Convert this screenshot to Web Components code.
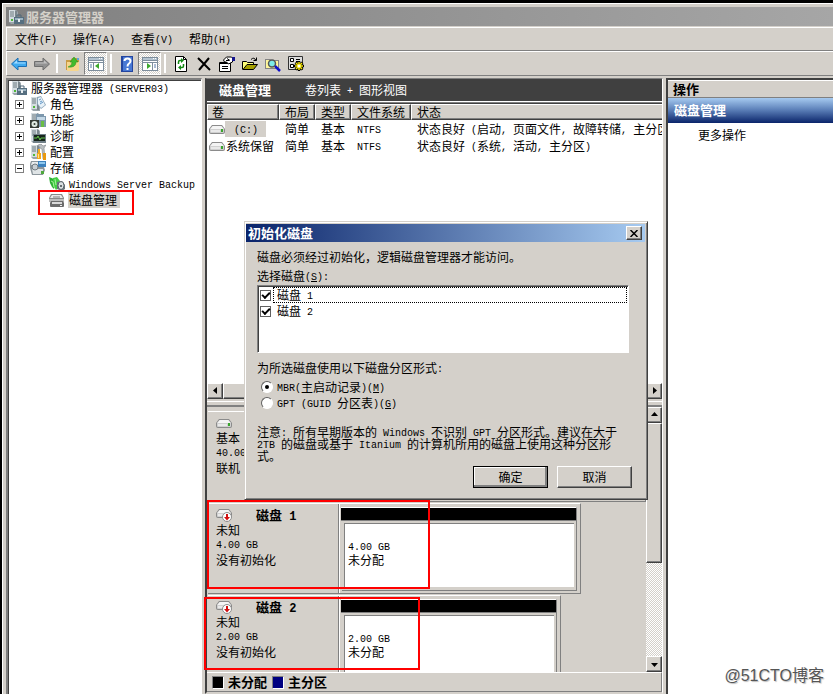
<!DOCTYPE html>
<html lang="zh-CN">
<head>
<meta charset="utf-8">
<title>服务器管理器</title>
<style>
html, body { margin: 0; height: 100%; overflow: hidden; background: #000; }
body {
  --face: #d4d0ca; --shadow: #808080; --dark: #404040; --light: #fff;
  font: 12px/16px "Noto Sans CJK SC", sans-serif; color: #000;
}
</style>
</head>
<body>
<server-manager></server-manager>
<script>
/* Half-width runs get a monospaced face that is half as wide as a Chinese character. */
const t = s => '<span>' + s.replace(/[\x20-\x7e]+/g, m => `<span class="l">${m}</span>`) + '</span>';

const BASE = `
  *, *::before { box-sizing: border-box; }
  :host { display: block; box-sizing: border-box; }
  .l { font-family: "Liberation Mono", monospace; font-size: 10px; line-height: 0; white-space: pre; vertical-align: 1px; }
  b .l { font-size: 12px; vertical-align: baseline; }
  button { font: inherit; color: inherit; background: var(--face); padding: 0; margin: 0; border: 0; border-radius: 0; }
  a { color: inherit; text-decoration: none; }
`;
class Base extends HTMLElement {
  connectedCallback() {
    if (this.shadowRoot) return;
    const r = this.attachShadow({ mode: 'open' });
    r.innerHTML = `<style>${BASE}${this.css()}</style>${this.html()}`;
  }
  css() { return ''; }
  html() { return '<slot></slot>'; }
}

const TOWER = `<path d="M1 1h7l2 2v12H3l-2-2z" fill="#9aa5ab"/><path d="M1 1h6v12H1z" fill="#d5dde1"/><path d="M2 3h4M2 5h4M2 7h4" stroke="#6d7a80"/><path d="M7 2h2v12H7z" fill="#7b878d"/><path d="M3 10h2v2H3z" fill="#4fb83a"/>`;
const DRIVE = `<path d="M3 4h10l3 4v3q0 2-2 2H2q-2 0-2-2V8z" fill="#8b8b8b"/><path d="M3.5 5h9l2.500 3H1z" fill="#f4f4f4"/><path d="M1 8h14v3q0 1-1 1H2q-1 0-1-1z" fill="#d0d0d0"/><path d="M2 9h9v2H2z" fill="#e9e9e9"/><path d="M12 8h2v3h-2z" fill="#39a52c"/>`;
const WINPANE = `<path d="M0 1h16v14H0z" fill="#7d8d9c"/><path d="M1 2h14v2H1z" fill="#b4c3d0"/><path d="M11 2h1v1h-1zM13 2h1v1h-1z" fill="#fff"/><path d="M1 5h14v1H1z" fill="#fff"/><path d="M1 7h14v7H1z" fill="#fff"/>`;
const ICONS = {
  server: TOWER + `<path d="M9 8V6h4v2" fill="none" stroke="#506878"/><path d="M6 8h10v7H6z" fill="#566f80"/><path d="M7 9h8v2H7z" fill="#9db4c2"/><path d="M10 10h2v3h-2z" fill="#e8edf0"/>`,
  roles: TOWER + `<path d="M7 1l4-1 5 9-5 4-4-5z" fill="#8ba4b8"/><path d="M8 2l3-1 4 8-4 3-3-4z" fill="#e7f1f8"/><path d="M9 4l2-1M10 6l2-1M10 8l3-2" stroke="#6297c7"/>`,
  features: TOWER + `<path d="M6 2h8v2h2v11H6z" fill="#7d98ad"/><path d="M7 5h8v3H7z" fill="#c3d7e5"/><path d="M0 8h9v8H0z" fill="#353c35"/><circle cx="4.5" cy="12" r="3" fill="#dfeae2"/><circle cx="4.5" cy="12" r="1" fill="#353c35"/><path d="M11 9h3v6h-3z" fill="#69bd45"/>`,
  diag: TOWER + `<path d="M3 6h13v9H3z" fill="#718089"/><path d="M4 7h11v6H4z" fill="#17261c"/><path d="M4 10h3l1-2 2 4 1-2h4" fill="none" stroke="#67c64e"/>`,
  config: TOWER + `<path d="M8 1l2 3 2 1 1 10h2L14 4l2-3-3 1-2-2z" fill="#b9bfc2" stroke="#7f8589" stroke-width=".6"/><path d="M8 5h2v4h1v6H7V9h1z" fill="#f2a91e"/><path d="M13 9h3v7h-3z" fill="#e99a12"/><path d="M8 10h1v4H8z" fill="#ffe18a"/>`,
  storage: `<path d="M1 1h9l1 3v4H0V4z" fill="#8d969b"/><path d="M2 2h7l1 3H1z" fill="#e8ecee"/><path d="M0 8l4-2 10 1 1 3-2 5H2z" fill="#8c969c"/><path d="M2 9h11v5H3z" fill="#dfe4e6"/><path d="M8 1h8v6H8z" fill="#3d82bd"/><path d="M9 2h6v2H9z" fill="#8ec8ee"/><circle cx="5" cy="7" r="3" fill="#c9d0d4" stroke="#737b80"/><path d="M11 11h3v3h-3z" fill="#4fa83d"/>`,
  backup: `<path d="M0 1l5 2 1 5-1 5-2-2-2-4z" fill="#2eb135"/><path d="M4 2l4-1 3 4-1 6-3 3-3-5z" fill="#43ce45"/><path d="M2 5l2 1 1 5M6 3l1 6" stroke="#a5f29b" fill="none"/><path d="M8 6l5-1 3 4v4l-3 2-5-2z" fill="#68747a"/><ellipse cx="12" cy="9.500" rx="3" ry="4" fill="#d9dfe1" stroke="#59646a"/><circle cx="12" cy="10" r="1" fill="#3f494e"/>`,
  disk: `<path d="M2 2h11l2 4v3H0V6z" fill="#888"/><path d="M3 3h9l2 3H1z" fill="#e9e9e9"/><path d="M4 4h7v2H4z" fill="#b4b4b4"/><path d="M0 7h15v3H0z" fill="#bdbdbd"/><path d="M2 9h12l1 2v3q0 1-1 1H2q-1 0-1-1v-3z" fill="#6b6b6b"/><path d="M3 10h10v2H3z" fill="#d9d9d9"/><path d="M11 13h2v1h-2z" fill="#eee"/>`,
  drive: DRIVE,
  driveWarn: `<g transform="translate(0 -2)">${DRIVE}</g><circle cx="11" cy="10" r="4.500" fill="#fff" stroke="#8d8d8d"/><path d="M10 7h2v3h2l-3 3.500L8 10h2z" fill="#d20f0f"/>`,
  back: `<path d="M0.500 8L7 2v3.500h8.500v5H7V14z" fill="#3eaaf0" stroke="#1c6fb3"/><path d="M2.500 7.500L6 4.300v2.200h8.500v1z" fill="#a5dcff"/>`,
  fwd: `<path d="M15.500 8L9 2v3.500H.5v5H9V14z" fill="#929292" stroke="#6e6e6e"/><path d="M13.500 7.500L10 4.300v2.200H1.500v1z" fill="#c0c0c0"/>`,
  up: `<path d="M1 4h5l1-2h7v12H1z" fill="#c89a43"/><path d="M2 6h12v8l-1 1H2z" fill="#f6d58c"/><path d="M12 2h2v2h-2z" fill="#5aa6dc"/><path d="M3 11q4-1 4-5H5l4-5 4 5h-2q0 6-8 5z" fill="#42bb2c" stroke="#248a1b" stroke-width=".5"/>`,
  paneL: WINPANE + `<path d="M5 7h1v7H5z" fill="#7d8d9c"/><path d="M2 9h2M2 11h2" stroke="#5679a8"/><path d="M11 7v6l-4-3z" fill="#3da92d"/>`,
  paneR: WINPANE + `<path d="M10 7h1v7h-1z" fill="#7d8d9c"/><path d="M12 9h2M12 11h2" stroke="#5679a8"/><path d="M5 7v6l4-3z" fill="#3da92d"/>`,
  help: `<path d="M2 0h12v16H2z" fill="#24459f"/><path d="M4 1h9v14H4z" fill="#4878d4"/><path d="M5.500 5q0-2.500 3-2.500t3 2.500q0 1.500-1.500 2.500T8.500 10.500" fill="none" stroke="#fff" stroke-width="2"/><path d="M7.500 12h2v2h-2z" fill="#fff"/>`,
  refresh: `<path d="M2.500.5h8l3 3v12h-11z" fill="#fff" stroke="#000"/><path d="M10.500.5v3h3" fill="none" stroke="#000"/><path d="M5.500 8V6q0-1.500 1.500-1.500h2M10.500 8v2q0 1.500-1.500 1.500H7" fill="none" stroke="#138a13" stroke-width="1.500"/><path d="M8 2v5l3-2.500zM8 9v5l-3-2.500z" fill="#138a13"/>`,
  del: `<path d="M2 2l12 12M13 2L3 14" stroke="#000" stroke-width="2"/>`,
  props: `<path d="M.5 6.500h11v9H.5z" fill="#fff" stroke="#000"/><path d="M1 7.500h10M3 10.500h6M3 12.500h6" stroke="#000"/><path d="M4.500 4l3-3h5l1 1v4l-4 2-2-2h-2z" fill="#fff" stroke="#000"/><path d="M7 4.500h3M8 2.500l3 2" stroke="#000"/><path d="M13 1h3v4h-3z" fill="#15158d"/>`,
  open: `<path d="M.5 13.500v-8h4l1 1h6v3" fill="#ffff7a" stroke="#000"/><path d="M1 13.500l4-5h10.500l-4 5z" fill="#a6a000" stroke="#000"/><path d="M9 3.500q3-3 5 1M14.500 1.500v3h-3" stroke="#000" fill="none"/>`,
  find: `<path d="M0 3h5l1 1h8v9H0z" fill="#848484"/><path d="M1 4h4l1 1h7v7H1z" fill="#fff79a"/><circle cx="7" cy="7.500" r="3.500" fill="#7dece9" stroke="#555" stroke-width="1.500"/><path d="M10 10l5 5" stroke="#1010c8" stroke-width="2.500"/>`,
  settings: `<path d="M.5.5h14v13H.5z" fill="#ddd" stroke="#333"/><path d="M2.500 2.500h3v3h-3zM2.500 8.500h3v3h-3z" fill="#fff" stroke="#000"/><path d="M8 3.500h4M8 5.500h4" stroke="#000"/><path d="M11 5v10M6 10h10M7.500 6.500l7 7M14.500 6.500l-7 7" stroke="#000" stroke-width="2.500"/><path d="M11 6v8M7 10h8M8 7l6 6M14 7l-6 6" stroke="#f6e600" stroke-width="1.500"/><circle cx="11" cy="10" r="1.500" fill="#fff"/>`
};

customElements.define('pix-icon', class extends Base {
  css() { return `:host { flex: none; width: 16px; height: 16px; } svg { display: block; }`; }
  html() { return `<svg width="16" height="16" viewBox="0 0 16 16" aria-hidden="true">${ICONS[this.getAttribute('name')]}</svg>`; }
});

customElements.define('title-bar', class extends Base {
  css() { return `:host { display: flex; align-items: center; gap: 2px; height: 19px; margin: 2px 0 1px 3px; padding-left: 2px;
    background: linear-gradient(90deg, #808080, #a6a6a6); color: #d4d0c8; font-size: 13px; font-weight: bold; }`; }
  html() { return `<pix-icon name="server"></pix-icon><slot></slot>`; }
});

customElements.define('menu-bar', class extends Base {
  css() { return `:host { display: flex; gap: 16px; height: 24px; align-items: center; margin-left: 3px; padding-left: 8px;
    border: solid var(--light); border-width: 1px 0 0 1px; border-bottom: 1px solid var(--shadow); }`; }
  html() { return ['文件(F)', '操作(A)', '查看(V)', '帮助(H)'].map(m => `<button>${t(m)}</button>`).join(''); }
});

customElements.define('tool-bar', class extends Base {
  css() { return `:host { display: flex; height: 25px; margin-left: 3px;
      border: solid var(--light); border-width: 1px 0 0 1px; border-bottom: 1px solid var(--shadow); }
    button { display: grid; place-items: center; width: 23px; height: 23px; border: 1px solid transparent; }
    .on { border-color: var(--shadow) #fff #fff var(--shadow); background: repeating-conic-gradient(#fff 0 25%, #d4d0ca 0 50%) 0 0/2px 2px; }
    hr { width: 2px; height: 19px; margin: 2px 3px 0; border: solid; border-width: 0 1px; border-color: var(--shadow) #fff; }`; }
  html() {
    return [['back', '后退'], ['fwd', '前进'], 0, ['up', '上一级'], ['paneL', '控制台树', 1], 0, ['help', '帮助'], ['paneR', '操作窗格', 1], 0,
      ['refresh', '刷新'], ['del', '删除'], ['props', '属性'], ['open', '打开'], ['find', '查找'], ['settings', '设置']]
      .map(b => b ? `<button aria-label="${b[1]}" class="${b[2] ? 'on' : ''}"><pix-icon name="${b[0]}"></pix-icon></button>` : '<hr>').join('');
  }
});

customElements.define('tree-item', class extends Base {
  css() { return `:host { display: flex; align-items: center; height: 16px; gap: 3px; padding-left: 3px; white-space: nowrap; }
    :host([level="1"]) { padding-left: 7px; }
    :host([level="2"]) { padding-left: 41px; }
    button { position: relative; flex: none; width: 9px; height: 9px; margin-right: 3px; background: #fff; border: 1px solid var(--shadow); }
    button::before { content: ""; position: absolute; inset: 3px 1px; background: #000; }
    button.plus::after { content: ""; position: absolute; inset: 1px 3px; background: #000; }
    a { padding: 0 1px; }
    :host([selected]) a { background: var(--face); padding-right: 3px; }`; }
  html() {
    const box = this.getAttribute('box');
    return (box ? `<button class="${box}" aria-label="${box === 'plus' ? '展开' : '折叠'}"></button>` : '') +
      `<pix-icon name="${this.getAttribute('icon')}"></pix-icon><a href="#">${t(this.getAttribute('label'))}</a>`;
  }
});

customElements.define('console-tree', class extends Base {
  css() { return `:host { background: #fff; border: solid; border-width: 2px 1px 0 2px; border-color: var(--shadow) #fff #fff var(--shadow);
    box-shadow: inset 1px 1px #404040; overflow: hidden; }`; }
  html() {
    return [[0, 'server', '服务器管理器 (SERVER03)'], [1, 'roles', '角色', 'plus'], [1, 'features', '功能', 'plus'], [1, 'diag', '诊断', 'plus'],
      [1, 'config', '配置', 'plus'], [1, 'storage', '存储', 'minus'], [2, 'backup', 'Windows Server Backup'], [2, 'disk', '磁盘管理', '', 1]]
      .map(([l, i, s, b, sel]) => `<tree-item level="${l}" icon="${i}" label="${s}" box="${b || ''}" ${sel ? 'selected' : ''}></tree-item>`).join('');
  }
});

customElements.define('scroll-bar', class extends Base {
  css() { return `:host { display: flex; height: 16px; flex: none; background: repeating-conic-gradient(#fff 0 25%, #d4d0ca 0 50%) 0 0/2px 2px; }
    :host([vertical]) { flex-direction: column; width: 16px; height: auto; }
    button, i { background: var(--face); border: solid; border-width: 1px; border-color: #fff var(--dark) var(--dark) #fff; box-shadow: inset -1px -1px var(--shadow); }
    button { flex: none; width: 16px; height: 16px; display: grid; place-items: center; }
    i { flex: 1; }
    :host([vertical]) i { flex: 140 1 0; }
    s { flex: 0 1 0; }
    :host([vertical]) s { flex: 95 1 0; }`; }
  html() {
    const v = this.hasAttribute('vertical');
    const a = v ? ['M0 5h7L3.500 1z', 'M0 2h7L3.500 6z'] : ['M5 0v7L1 3.500z', 'M2 0v7l4-3.500z'];
    const b = (d, n) => `<button aria-label="${n}"><svg width="7" height="7"><path d="${d}"/></svg></button>`;
    return b(a[0], '向前滚动') + '<i></i><s></s>' + b(a[1], '向后滚动');
  }
});

customElements.define('volume-list', class extends Base {
  css() { return `:host { display: flex; flex-direction: column; background: #fff; border-top: 1px solid var(--shadow); box-shadow: inset 0 1px #404040; padding-top: 1px; overflow: hidden; }
    .box { flex: 1; min-height: 0; overflow: hidden; }
    table { width: 100%; table-layout: fixed; border-collapse: separate; border-spacing: 0; }
    th, td { padding: 0 0 0 6px; text-align: left; font-weight: normal; white-space: nowrap; overflow: hidden; }
    th { height: 16px; line-height: 14px; padding-left: 5px; background: var(--face); border: solid; border-width: 1px; border-color: #fff var(--dark) var(--dark) #fff; box-shadow: inset -1px -1px var(--shadow); }
    th:first-child { padding-left: 4px; } th:last-child { border-right: 0; box-shadow: inset 0 -1px var(--shadow); }
    td { height: 17px; }
    td:first-child { padding-left: 2px; }
    .n { display: flex; align-items: center; }
    .v { padding: 0 1px; }
    .sel .v { background: var(--face); padding: 0 8px 0 9px; }`; }
  html() {
    const row = (c, sel) => `<tr class="${sel ? 'sel' : ''}"><td><div class="n"><pix-icon name="drive"></pix-icon><span class="v">${t(c[0])}</span></div></td>` +
      c.slice(1).map(x => `<td>${t(x)}</td>`).join('') + '</tr>';
    return `<div class="box"><table><colgroup><col style="width:72px"><col style="width:36px"><col style="width:36px"><col style="width:60px"><col></colgroup>
      <thead><tr>${['卷', '布局', '类型', '文件系统', '状态'].map(x => `<th>${x}</th>`).join('')}</tr></thead><tbody>` +
      row(['(C:)', '简单', '基本', 'NTFS', '状态良好 (启动, 页面文件, 故障转储, 主分区)'], 1) +
      row(['系统保留', '简单', '基本', 'NTFS', '状态良好 (系统, 活动, 主分区)']) +
      `</tbody></table></div><scroll-bar></scroll-bar>`;
  }
});

customElements.define('disk-row', class extends Base {
  css() { return `:host { display: flex; flex: none; height: 91px; margin-bottom: 1px; background: var(--face);
      border-top: 1px solid #fff; border-right: 1px solid var(--shadow); border-bottom: 1px solid var(--shadow); }
    .info { flex: none; width: 131px; padding: 3px 0 0 8px; border-right: 1px solid var(--shadow); }
    .head { display: flex; align-items: center; height: 16px; gap: 24px; }
    b { font-size: 13px; line-height: 16px; }
    p { margin: 0; line-height: 14px; }
    p.last { line-height: 18px; }
    .map { flex: 1; display: flex; flex-direction: column; padding: 3px 3px 2px 1px; border-left: 1px solid #fff; min-width: 0; }
    .bar { flex: none; height: 14px; background: #000; border: solid; border-width: 1px 1px 1px 0; border-color: #fff var(--shadow) var(--shadow); }
    .part { flex: 1; margin: 0 0 0 1px; padding: 2px 2px 3px; border-right: 1px solid var(--shadow); border-bottom: 1px solid var(--shadow); }
    .in { height: 100%; padding: 15px 0 0 3px; background: #fff; border-top: 1px solid var(--shadow); border-left: 1px solid var(--shadow); }`; }
  html() {
    const g = n => this.getAttribute(n), size = g('size');
    return `<div class="info"><div class="head"><pix-icon name="${g('icon')}"></pix-icon><b>${t(g('name'))}</b></div>
      <p>${t(g('kind'))}</p><p>${t(size)}</p><p class="last">${t(g('state'))}</p></div>
      <div class="map"><div class="bar"></div><div class="part"><div class="in"><p>${t(size)}</p><p>${t(g('use'))}</p></div></div></div>`;
  }
});

customElements.define('disk-graph', class extends Base {
  css() { return `:host { display: flex; flex-direction: column; min-height: 0; }
    .top { display: flex; flex: 1; min-height: 0; }
    .rows { flex: 1; min-width: 0; padding: 4px 0 0 1px; display: flex; flex-direction: column; overflow: hidden; }
    .legend { flex: none; height: 20px; display: flex; align-items: center; gap: 4px; padding-left: 5px; font-size: 13px; border: solid; border-width: 1px 1px 1px 0; border-color: #fff var(--shadow) var(--shadow); }
    .sw { width: 12px; height: 13px; background: #000; border: 1px solid; border-color: var(--shadow) #fff #fff var(--shadow); }
    .blue { background: #000080; margin-left: 1px; }`; }
  html() {
    return `<div class="top"><div class="rows">
      <disk-row icon="drive" name="磁盘 0" kind="基本" size="40.00 GB" state="联机" use="NTFS" style="width:100%"></disk-row>
      <disk-row icon="driveWarn" name="磁盘 1" kind="未知" size="4.00 GB" state="没有初始化" use="未分配" style="width:373px"></disk-row>
      <disk-row icon="driveWarn" name="磁盘 2" kind="未知" size="2.00 GB" state="没有初始化" use="未分配" style="width:353px"></disk-row>
      </div><scroll-bar vertical></scroll-bar></div>
      <div class="legend"><span class="sw"></span><b>未分配</b><span class="sw blue"></span><b>主分区</b></div>`;
  }
});

customElements.define('disk-view', class extends Base {
  css() { return `:host { display: flex; flex-direction: column; min-width: 0; border: solid; border-width: 1px 1px 2px 2px; border-color: var(--shadow) #fff var(--face) var(--dark); }
    header { flex: none; display: flex; align-items: center; gap: 34px; height: 23px; padding-left: 12px; background: #404040; color: #fff; border-bottom: 1px solid #fff; }
    header b { font-size: 13px; }
    volume-list { flex: 296 1 0; }
    .split { flex: none; height: 8px; border-top: 2px solid var(--face); background: var(--face); }
    .split::before { content: ""; display: block; height: 6px; border: solid; border-width: 1px 0 2px; border-color: #fff transparent var(--shadow); }
    disk-graph { flex: 286 1 0; }`; }
  html() { return `<header><b>磁盘管理</b>${t('卷列表 + 图形视图')}</header><volume-list></volume-list><div class="split"></div><disk-graph></disk-graph>`; }
});

customElements.define('action-pane', class extends Base {
  css() { return `:host { background: #fff; border: solid; border-width: 2px 0 0 2px; border-color: var(--dark); }
    h2, h3 { margin: 0; font-size: 13px; }
    h2 { height: 18px; line-height: 16px; padding-left: 5px; background: var(--face); border-top: 1px solid #fff; border-bottom: 1px solid var(--shadow); }
    h3 { height: 25px; line-height: 24px; padding-left: 6px; color: #fff; background: linear-gradient(#a6caf0, #5f83bb 45%, #0a246a); }
    a { display: block; padding: 4px 0 0 30px; }`; }
  html() { return `<h2>操作</h2><h3>磁盘管理</h3><a href="#">更多操作</a>`; }
});

customElements.define('init-dialog', class extends Base {
  css() { return `:host { background: var(--face); padding: 1px; border: 1px solid; border-color: var(--face) var(--dark) var(--dark) var(--face); box-shadow: inset 1px 1px #fff, inset -1px -1px var(--shadow); }
    header { display: flex; align-items: center; justify-content: space-between; height: 18px; margin: 1px 1px 0 0; padding: 0 3px 0 2px;
      background: linear-gradient(90deg, #0a246a, #a6caf0); color: #fff; font-size: 13px; font-weight: bold; }
    .x, .btn { border: 1px solid; border-color: #fff var(--dark) var(--dark) #fff; box-shadow: inset -1px -1px var(--shadow); color: #000; }
    .x { width: 16px; height: 14px; display: grid; place-items: center; }
    .body { padding: 7px 17px 10px 11px; }
    p { margin: 0; }
    label { display: flex; align-items: center; height: 16px; }
    .list { height: 68px; margin: 1px 0 7px; padding: 1px; background: #fff; border: 1px solid; border-color: var(--shadow) #fff #fff var(--shadow); box-shadow: inset 1px 1px #404040; }
    .list > label > span { flex: 1; margin-left: 1px; padding-left: 3px; border: 1px dotted transparent; line-height: 14px; }
    .list > label:first-child > span { border-color: #000; }
    input { appearance: none; flex: none; margin: 0 1px; display: grid; place-items: center; background: #fff; }
    [type=checkbox] { width: 11px; height: 11px; border: 1px solid #606060; }
    [type=checkbox]:checked::after { content: ""; width: 6px; height: 3px; margin-top: -2px; border: solid #000; border-width: 0 0 2px 2px; transform: rotate(-45deg); }
    [type=radio] { width: 12px; height: 12px; margin: 0 4px; border: 1px solid; border-color: #606060 #fff #fff #606060; border-radius: 50%; }
    [type=radio]:checked::after { content: ""; width: 4px; height: 4px; border-radius: 50%; background: #000; }
    .opts { margin-top: 3px; }
    /* The note is set solid, so it takes its line box from a face with short ascenders. */
    .note { margin: 16px 7px 3px 0; font-family: "Liberation Sans", "Noto Sans CJK SC", sans-serif; line-height: 12px; }
    .note .l { white-space: pre-wrap; }
    .row { display: flex; justify-content: flex-end; gap: 9px; margin-right: -3px; }
    .btn { width: 75px; height: 22px; }
    .def { outline: 1px solid #000; outline-offset: -1px; box-shadow: inset -2px -2px var(--shadow), inset 1px 1px #fff; }
    u { text-underline-offset: 1px; }`; }
  html() {
    const u = s => t(s).replace(/\((\w)\)/, '(<u>$1</u>)');
    return `<header><span>初始化磁盘</span><button class="x" aria-label="关闭"><svg width="8" height="7"><path d="M.5 0l7 7M7.500 0l-7 7" stroke="#000" stroke-width="1.500"/></svg></button></header>
    <div class="body">
      <p>磁盘必须经过初始化，逻辑磁盘管理器才能访问。</p>
      <p style="margin-top:3px">${u('选择磁盘(S):')}</p>
      <div class="list"><label><input type="checkbox" checked>${t('磁盘 1')}</label><label><input type="checkbox" checked>${t('磁盘 2')}</label></div>
      <p>${t('为所选磁盘使用以下磁盘分区形式:')}</p>
      <div class="opts"><label><input type="radio" name="style" checked>${u('MBR(主启动记录)(M)')}</label><label><input type="radio" name="style">${u('GPT (GUID 分区表)(G)')}</label></div>
      <p class="note">${t('注意: 所有早期版本的 Windows 不识别 GPT 分区形式。建议在大于 2TB 的磁盘或基于 Itanium 的计算机所用的磁盘上使用这种分区形式。')}</p>
      <div class="row"><button class="btn def">确定</button><button class="btn">取消</button></div>
    </div>`;
  }
});

customElements.define('server-manager', class extends Base {
  css() { return `:host { height: 100vh; padding: 3px 0 0 2px; background: #000; }
    .win { display: flex; flex-direction: column; height: 100%; background: var(--face); border: solid #fff; border-width: 1px 0 0 1px; padding-top: 1px; }
    main { flex: 1; min-height: 0; display: grid; grid-template-columns: 196px minmax(0, 1fr) 167px; gap: 3px; padding: 2px 0 0 3px; }
    init-dialog { position: absolute; left: 244px; top: 221px; width: 404px; }
    .mark { position: absolute; border: 2px solid #f00; pointer-events: none; }
    .m1 { left: 38px; top: 190px; width: 96px; height: 25px; }
    .m2 { left: 207px; top: 500px; width: 223px; height: 89px; }
    .m3 { left: 204px; top: 597px; width: 216px; height: 73px; }
    .wm { position: absolute; right: 9px; bottom: 8px; font: 16px/20px "Liberation Sans", "Noto Sans CJK SC", sans-serif; color: #555; text-shadow: -1px -1px #fff, 1px 1px 1px #bbb; }`; }
  html() {
    return `<div class="win"><title-bar>服务器管理器</title-bar><menu-bar></menu-bar><tool-bar></tool-bar>
      <main><console-tree></console-tree><disk-view></disk-view><action-pane></action-pane></main></div>
      <init-dialog role="dialog"></init-dialog>
      <div class="mark m1"></div><div class="mark m2"></div><div class="mark m3"></div><div class="wm">@51CTO博客</div>`;
  }
});
</script>
</body>
</html>
